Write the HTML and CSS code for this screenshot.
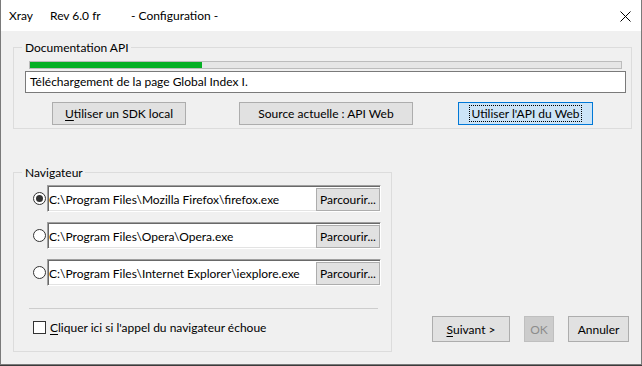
FILE: index.html
```html
<!DOCTYPE html>
<html lang="fr">
<head>
    <meta charset="UTF-8">
    <meta name="viewport" content="width=device-width, initial-scale=1.0">
    <title>Xray - Configuration</title>
    <link rel="stylesheet" href="styles.css">
</head>
<body>
    <div class="window">
        <div class="titlebar">
            <span class="title-app">Xray</span>
            <span class="title-rev">Rev 6.0 fr</span>
            <span class="title-caption">- Configuration -</span>
            <button class="close-btn" title="Fermer">
                <svg width="11" height="11" viewBox="0 0 11 11">
                    <path d="M0.5 0.5 L10.5 10.5 M10.5 0.5 L0.5 10.5" stroke="#000" stroke-width="1" fill="none"/>
                </svg>
            </button>
        </div>

        <div class="client">
            <fieldset class="group group-doc">
                <legend>Documentation API</legend>
                <div class="progress">
                    <div class="progress-fill" style="width: 29.1%"></div>
                </div>
                <div class="status-box">Téléchargement de la page Global Index I.</div>
                <div class="source-row">
                    <button class="btn btn-sdk"><u>U</u>tiliser un SDK local</button>
                    <button class="btn btn-source">Source actuelle : API Web</button>
                    <button class="btn btn-web btn-default"><span class="focus-rect">Utiliser l'API du Web</span></button>
                </div>
            </fieldset>

            <div class="lower">
                <fieldset class="group group-nav">
                    <legend>Navigateur</legend>
                    <div class="browser-list">
                        <div class="browser-row">
                            <span class="radio checked"></span>
                            <div class="path-field">
                                <span class="path-text">C:\Program Files\Mozilla Firefox\firefox.exe</span>
                                <button class="btn btn-browse">Parcourir...</button>
                            </div>
                        </div>
                        <div class="browser-row">
                            <span class="radio"></span>
                            <div class="path-field">
                                <span class="path-text">C:\Program Files\Opera\Opera.exe</span>
                                <button class="btn btn-browse">Parcourir...</button>
                            </div>
                        </div>
                        <div class="browser-row">
                            <span class="radio"></span>
                            <div class="path-field">
                                <span class="path-text">C:\Program Files\Internet Explorer\iexplore.exe</span>
                                <button class="btn btn-browse">Parcourir...</button>
                            </div>
                        </div>
                    </div>
                    <div class="separator"></div>
                    <label class="check-row">
                        <span class="checkbox"></span>
                        <span><u>C</u>liquer ici si l'appel du navigateur échoue</span>
                    </label>
                </fieldset>

                <div class="dialog-buttons">
                    <button class="btn btn-next"><u>S</u>uivant &gt;</button>
                    <button class="btn btn-ok" disabled>OK</button>
                    <button class="btn btn-cancel">Annuler</button>
                </div>
            </div>
        </div>
    </div>
</body>
</html>
```

FILE: styles.css
```css
* {
    margin: 0;
    padding: 0;
    box-sizing: border-box;
}

body {
    background-color: #3b3b3b;
    font-family: 'Segoe UI', Lato, 'Noto Sans', sans-serif;
    font-size: 12px;
    color: #000;
}

.window {
    width: 642px;
    height: 365px;
    background-color: #f0f0f0;
    border: 1px solid #7a7a7a;
    border-top: none;
    display: flex;
    flex-direction: column;
}

/* Title bar */
.titlebar {
    height: 31px;
    background-color: #fff;
    display: flex;
    align-items: center;
    padding-left: 8px;
}

.title-app {
    width: 41px;
}

.title-rev {
    width: 81px;
}

.title-caption {
    flex: 1;
}

.close-btn {
    border: none;
    background: none;
    width: 11px;
    height: 11px;
    margin-right: 10px;
    margin-top: 1px;
    display: flex;
}

/* Client area */
.client {
    flex: 1;
    padding: 8px 9px 0 12px;
}

.group {
    border: 1px solid #dcdcdc;
    min-width: 0;
}

.group legend {
    line-height: 17px;
    margin-left: -3px;
    padding: 0 2px 0 3px;
}

.group-doc {
    padding: 5px 5px 3px 11px;
}

.progress {
    height: 8px;
    margin: 0 4px;
    border: 1px solid #bcbcbc;
    background-color: #e6e6e6;
}

.progress-fill {
    height: 100%;
    background-color: #06b025;
}

.status-box {
    height: 22px;
    margin-top: 2px;
    border: 1px solid #7a7a7a;
    background-color: #fff;
    padding-left: 4px;
    line-height: 20px;
}

.source-row {
    display: flex;
    margin-top: 9px;
}

/* Buttons */
.btn {
    font-family: inherit;
    font-size: 12px;
    color: #000;
    background-color: #e1e1e1;
    border: 1px solid #adadad;
    height: 23px;
    display: flex;
    align-items: center;
    justify-content: center;
}

.btn u {
    text-underline-offset: 2px;
}

.btn-sdk {
    width: 134px;
    margin-left: 27px;
}

.btn-source {
    width: 174px;
    margin-left: 53px;
}

.btn-web {
    width: 135px;
    margin-left: 45px;
}

.btn-default {
    background-color: #cce4f7;
    border-color: #0078d7;
}

.focus-rect {
    outline: 1px dotted #000;
    padding: 0 1px;
    line-height: 15px;
}

/* Browser group */
.lower {
    margin-top: 35px;
    display: flex;
    justify-content: space-between;
    align-items: flex-end;
}

.group-nav {
    width: 379px;
    padding: 4px 10px 17px 19px;
}

.group-nav legend {
    margin-left: -11px;
}

.browser-list {
    display: flex;
    flex-direction: column;
    gap: 10px;
}

.browser-row {
    display: flex;
    align-items: center;
    gap: 1px;
}

.radio {
    width: 13px;
    height: 13px;
    border: 1px solid #333;
    border-radius: 50%;
    background-color: #fff;
    display: flex;
    align-items: center;
    justify-content: center;
}

.radio.checked::after {
    content: "";
    width: 7px;
    height: 7px;
    border-radius: 50%;
    background-color: #333;
}

.path-field {
    width: 334px;
    height: 27px;
    background-color: #fff;
    border: 1px solid #fff;
    border-top-color: #a0a0a0;
    border-left-color: #a0a0a0;
    box-shadow: inset 1px 1px 0 #696969, inset -1px -1px 0 #e3e3e3;
    display: flex;
    align-items: flex-start;
    padding: 1px 0 0 1px;
}

.path-text {
    flex: 1;
    line-height: 23px;
    margin-top: 1px;
    white-space: nowrap;
    overflow: hidden;
}

.btn-browse {
    width: 64px;
    margin-top: 1px;
}

.separator {
    height: 1px;
    margin: 22px 3px 0 -4px;
    background-color: #cdcdcd;
}

.check-row {
    display: flex;
    align-items: center;
    gap: 4px;
    margin-top: 12px;
    height: 13px;
}

.check-row u {
    text-underline-offset: 2px;
}

.checkbox {
    width: 13px;
    height: 13px;
    border: 1px solid #333;
    background-color: #fff;
}

/* Dialog buttons */
.dialog-buttons {
    display: flex;
    gap: 14px;
    margin: 0 3px 10px 0;
}

.dialog-buttons .btn {
    height: 26px;
}

.btn-next {
    width: 78px;
}

.btn-ok {
    width: 30px;
    background-color: #cccccc;
    border-color: #bfbfbf;
    color: #8c8c8c;
}

.btn-cancel {
    width: 61px;
}
```
